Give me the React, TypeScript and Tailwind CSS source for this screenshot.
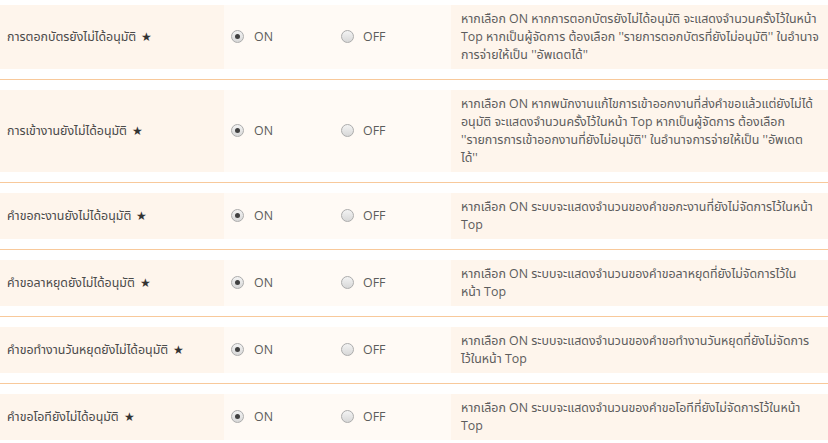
import React from 'react';

const rows: { label: string; desc: string[] }[] = [
  {
    label: 'การตอกบัตรยังไม่ได้อนุมัติ',
    desc: [
      'หากเลือก ON หากการตอกบัตรยังไม่ได้อนุมัติ จะแสดงจำนวนครั้งไว้ในหน้า',
      "Top หากเป็นผู้จัดการ ต้องเลือก ''รายการตอกบัตรที่ยังไม่อนุมัติ'' ในอำนาจ",
      "การจ่ายให้เป็น ''อัพเดตได้''",
    ],
  },
  {
    label: 'การเข้างานยังไม่ได้อนุมัติ',
    desc: [
      'หากเลือก ON หากพนักงานแก้ไขการเข้าออกงานที่ส่งคำขอแล้วแต่ยังไม่ได้',
      'อนุมัติ จะแสดงจำนวนครั้งไว้ในหน้า Top หากเป็นผู้จัดการ ต้องเลือก',
      "''รายการการเข้าออกงานที่ยังไม่อนุมัติ'' ในอำนาจการจ่ายให้เป็น ''อัพเดต",
      "ได้''",
    ],
  },
  {
    label: 'คำขอกะงานยังไม่ได้อนุมัติ',
    desc: ['หากเลือก ON ระบบจะแสดงจำนวนของคำขอกะงานที่ยังไม่จัดการไว้ในหน้า', 'Top'],
  },
  {
    label: 'คำขอลาหยุดยังไม่ได้อนุมัติ',
    desc: ['หากเลือก ON ระบบจะแสดงจำนวนของคำขอลาหยุดที่ยังไม่จัดการไว้ใน', 'หน้า Top'],
  },
  {
    label: 'คำขอทำงานวันหยุดยังไม่ได้อนุมัติ',
    desc: ['หากเลือก ON ระบบจะแสดงจำนวนของคำขอทำงานวันหยุดที่ยังไม่จัดการ', 'ไว้ในหน้า Top'],
  },
  {
    label: 'คำขอโอทียังไม่ได้อนุมัติ',
    desc: ['หากเลือก ON ระบบจะแสดงจำนวนของคำขอโอทีที่ยังไม่จัดการไว้ในหน้า', 'Top'],
  },
];

function Radio({ checked }: { checked?: boolean }) {
  return (
    <span className="relative inline-flex h-[13px] w-[13px] shrink-0 items-center justify-center rounded-full border border-[#acacac] bg-gradient-to-b from-[#f3f3f3] to-[#d8d8d8]">
      {checked && <span className="h-[5px] w-[5px] rounded-full bg-[#404040]" />}
    </span>
  );
}

export default function App() {
  return (
    <div
      className="w-[828px] h-[443px] overflow-hidden bg-white text-[12.4px] text-[#5c5c5c]"
      style={{ fontFamily: '"Open Sans", "Noto Sans Thai", "Noto Sans", sans-serif' }}
    >
      {rows.map((row, i) => (
        <div
          key={i}
          className={`border-b border-[#f8c99b] pb-[10px] ${i === 0 ? 'pt-[5px]' : 'pt-[10px]'}`}
        >
          <div className="flex items-stretch">
            <div className="flex w-[224px] shrink-0 items-center bg-[#fef5ec] pl-[7px] text-[#4a4a4a]">
              {row.label} <span className="ml-[5px] text-[#333]">★</span>
            </div>
            <div className="flex w-[227px] shrink-0 items-center bg-[#fffaf5] pl-[7px]">
              <label className="flex w-[110px] items-center gap-[10px]">
                <Radio checked />
                <span>ON</span>
              </label>
              <label className="flex items-center gap-[9px]">
                <Radio />
                <span>OFF</span>
              </label>
            </div>
            <div className="min-w-0 flex-1 bg-[#fef5ec] py-[5px] pl-[10px] leading-[18px]">
              {row.desc.map((line, j) => (
                <div key={j} className="whitespace-nowrap">
                  {line}
                </div>
              ))}
            </div>
          </div>
        </div>
      ))}
    </div>
  );
}
